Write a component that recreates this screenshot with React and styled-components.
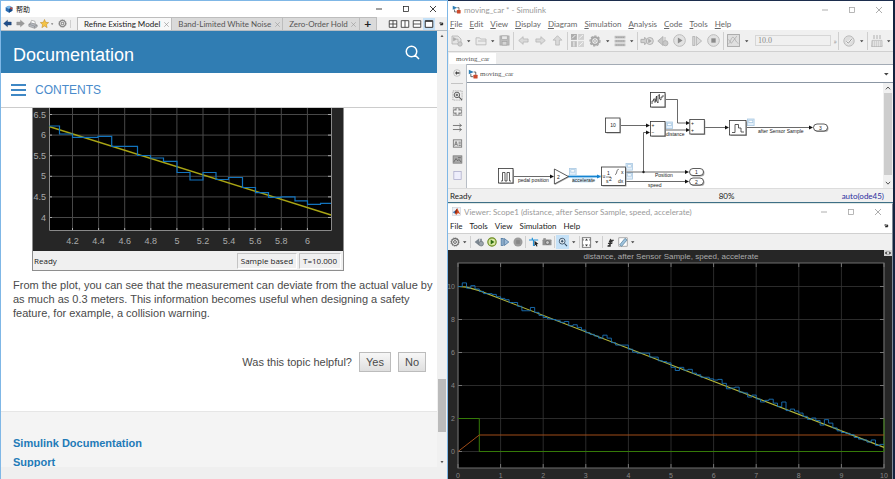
import React from "react";
import styled, { createGlobalStyle, css } from "styled-components";

const UI_FONT = `"Lato", "Noto Sans CJK SC", sans-serif`;
const DOC_FONT = `"Liberation Sans", Arial, sans-serif`;

const GlobalStyle = createGlobalStyle`
  * {
    box-sizing: border-box;
  }
  body {
    margin: 0;
    background: #14233f;
    font-family: ${UI_FONT};
    font-size: 8px;
    line-height: 12px;
    overflow: hidden;
  }
  button, input, select {
    margin: 0;
    padding: 0;
    border: 0;
    background: none;
    color: inherit;
    font: inherit;
  }
  svg {
    display: block;
  }
`;

/* ---------- shared parts ---------- */

const Desktop = styled.div`
  display: grid;
  grid-template-columns: 448fr 445fr;
  height: 100vh;
  padding-right: 2px;
`;
const Column = styled.div`
  display: flex;
  flex-direction: column;
  min-width: 0;
  min-height: 0;
`;
const Window = styled.section`
  display: flex;
  flex-direction: column;
  min-width: 0;
  min-height: 0;
  background: #fff;
`;
const TitleBar = styled.header`
  display: flex;
  align-items: center;
  flex: none;
  gap: 3px;
  height: ${props => props.$height}px;
  padding: 0 8px 0 4px;
  color: ${props => (props.$inactive ? "#999" : "#111")};

  & h1 {
    margin: 0;
    font-size: ${props => props.$size || 8}px;
    font-weight: normal;
    white-space: nowrap;
  }
`;
const WindowButtons = styled.div`
  display: flex;
  gap: 15px;
  margin-left: auto;
`;
const IconButton = styled.button`
  display: flex;
  align-items: center;
  justify-content: center;
  flex: none;
  width: ${props => props.$w || 12}px;
  height: ${props => props.$h || 12}px;
  background: ${props => (props.$active ? "#c5e1f7" : "transparent")};
  opacity: ${props => (props.$faded ? 0.5 : 1)};
`;
const MenuBar = styled.nav`
  display: flex;
  align-items: center;
  flex: none;
  gap: 7px;
  height: ${props => props.$height}px;
  padding: 0 2px;
  color: ${props => props.$color};
`;
const MenuButton = styled.button`
  white-space: nowrap;

  &::first-letter {
    text-decoration: ${props => (props.$underline ? "underline" : "none")};
  }
`;
const Separator = styled.span`
  flex: none;
  width: 1px;
  height: ${props => props.$h || 18}px;
  margin: 0 1px;
  background: #cfcfcf;
`;
const MenuArrow = styled.span`
  margin-left: auto;
`;

const glyphs = {
  minimize: <path d="M3 6H9" stroke="currentColor" strokeWidth=".8" />,
  maximize: <rect x="3.5" y="3.5" width="5" height="5" fill="none" stroke="currentColor" strokeWidth=".7" />,
  close: <path d="M3 3L9 9M9 3L3 9" stroke="currentColor" strokeWidth=".8" />,
  caret: <path d="M4 5H8.6L6.3 7.6Z" fill="#444" />,
  dock: <path d="M3.5 4.5L7 7M5 7.3H8.6V4.3ZM4.3 4H7" stroke="#111" strokeWidth="1" fill="#111" />,
  cube: (
    <g>
      <path d="M6 1L11 3.5V8.5L6 11.5L1 8.5V3.5Z" fill="#2a6db4" />
      <path d="M1 3.5L6 6L11 3.5L6 1Z" fill="#7db9e8" />
      <path d="M6 6L11 3.5V8.5L6 11.5Z" fill="#174a86" />
      <path d="M7.5 2.5L11.5 5L9 7Z" fill="#d8432b" />
    </g>
  ),
  backBlue: <path d="M.8 6L6 1.6V4H11V8H6V10.4Z" fill="#1f4e8c" stroke="#16375f" strokeWidth=".5" />,
  nextGrey: <path d="M11.2 6L6 1.6V4H1V8H6V10.4Z" fill="#9a9a9a" stroke="#888" strokeWidth=".5" />,
  print: (
    <g stroke="#777" strokeWidth=".6">
      <path d="M2.6 5.4L4.4 1.6L8.4 2.8L8.8 6Z" fill="#fff" />
      <path d="M1 6.2L4 4.6L11 7.2V9.4L8 11.2L1 8.8Z" fill="#b9bdc4" />
      <path d="M1 6.2L8 8.6L11 7.2M8 8.6V11" fill="none" />
    </g>
  ),
  star: <path d="M6 .6L7.6 4.4L11.6 4.8L8.6 7.5L9.5 11.5L6 9.4L2.5 11.5L3.4 7.5L.4 4.8L4.4 4.4Z" fill="#f6c445" stroke="#b57d15" strokeWidth=".6" />,
  gearDark: (
    <g fill="none" stroke="#666">
      <circle cx="6" cy="6" r="5" strokeWidth=".8" strokeDasharray="1.6 .9" />
      <circle cx="6" cy="6" r="4.1" strokeWidth="1.3" />
      <circle cx="6" cy="6" r="1.7" strokeWidth="1.2" />
    </g>
  ),
  grid4: <path d="M1.5 2H10.5V10H1.5ZM6 2V10M1.5 6H10.5" fill="#fff" stroke="#333" strokeWidth="1" />,
  split2: <path d="M1.5 2H10.5V10H1.5ZM6 2V10" fill="#fff" stroke="#333" strokeWidth="1" />,
  rows2: <path d="M1.5 2H10.5V10H1.5ZM1.5 6H10.5" fill="#fff" stroke="#333" strokeWidth="1" />,
  single: <path d="M1.5 2H10.5V10H1.5ZM1.5 2.8H10.5" fill="#fff" stroke="#333" strokeWidth="1.2" />,
  search: <path d="M8.2 8.2L11.2 11.2M9.4 5.2A4.2 4.2 0 1 1 1 5.2A4.2 4.2 0 1 1 9.4 5.2Z" fill="none" stroke="#fff" strokeWidth="1.2" />,
  burger: <path d="M0 1H12M0 6H12M0 11H12" stroke="#3f88c5" strokeWidth="2" />,
  up: <path d="M4.2 7.2L6 4.6L7.8 7.2Z" fill="#555" />,
  down: <path d="M4.2 4.8L6 7.4L7.8 4.8Z" fill="#555" />,
  chevUp: <path d="M3.4 7.6L6 4.8L8.6 7.6" fill="none" stroke="#555" strokeWidth="1.2" />,
  chevDown: <path d="M3.4 4.6L6 7.4L8.6 4.6" fill="none" stroke="#555" strokeWidth="1.2" />,
  expand: <path d="M4 3L1 6L4 9M8 3L11 6L8 9M1 6H4M8 6H11" fill="none" stroke="#222" strokeWidth="1.8" />,
  model: (
    <g>
      <path d="M1 1L7 3.6L1 6.4Z" fill="#2f7fb5" />
      <path d="M7 3.6H9.3V7" fill="none" stroke="#333" strokeWidth=".9" />
      <rect x="6.5" y="6.8" width="5" height="4.6" rx=".6" fill="#cc4a2c" />
      <path d="M3.4 6V9.2H6.4" fill="none" stroke="#333" strokeWidth=".9" />
    </g>
  ),
  matlab: (
    <g>
      <rect x=".5" y=".5" width="11" height="11" fill="#eef1f5" stroke="#b9c2cc" strokeWidth=".6" />
      <path d="M1 7L4 5L6 7.5L4 9Z" fill="#3d7ab8" />
      <path d="M4 5.5L7 1.5L8.6 5L11 9.5L8 8L5.5 10.5L4.2 8.8Z" fill="#d2481f" />
      <path d="M7 1.5L6 7L4.2 8.8L4 5.5Z" fill="#7a2a1c" />
    </g>
  ),
  newModel: (
    <g fill="#e4e4e4" stroke="#aaa" strokeWidth=".7">
      <path d="M1 1H7L10 4V9H1Z" />
      <path d="M2.4 2.6L5.4 4.2L2.4 5.8Z" fill="#aaa" />
      <path d="M5.4 4.2H7V7" fill="none" />
      <circle cx="9" cy="9" r="2.2" fill="#cfcfcf" />
    </g>
  ),
  folder: <path d="M1 9.8V2.8H4.6L5.6 4H11V9.8ZM3 6H11" fill="#ececec" stroke="#b5b5b5" strokeWidth=".8" />,
  save: (
    <g stroke="#a2a2a2" strokeWidth=".7">
      <rect x="1" y="1" width="10" height="10" fill="#bdbdbd" />
      <rect x="3" y="1" width="6" height="4" fill="#e8e8e8" />
      <rect x="3.4" y="7.2" width="5.2" height="3.8" fill="#d6d6d6" />
    </g>
  ),
  left: <path d="M.8 6L5.6 1.8V4.3H11V7.7H5.6V10.2Z" fill="#dadada" stroke="#b2b2b2" strokeWidth=".8" />,
  right: <path d="M11.2 6L6.4 1.8V4.3H1V7.7H6.4V10.2Z" fill="#dadada" stroke="#b2b2b2" strokeWidth=".8" />,
  upArrow: <path d="M6 .8L10.8 5.6H8V11H4V5.6H1.2Z" fill="#dadada" stroke="#b2b2b2" strokeWidth=".8" />,
  library: (
    <g>
      <rect x="0" y="0" width="5.4" height="5.4" fill="#adadad" />
      <rect x="6.6" y="0" width="5.4" height="5.4" fill="#cfcfcf" />
      <rect x="0" y="6.6" width="5.4" height="5.4" fill="#bdbdbd" />
      <rect x="6.6" y="6.6" width="5.4" height="5.4" fill="#d3d3d3" />
      <path d="M1 4L4 1M7.6 4L11 1M2.7 7V11.6M7.6 10.8L11 7.6" stroke="#f4f4f4" strokeWidth=".9" />
    </g>
  ),
  gear: (
    <g fill="none" stroke="#a6a6a6">
      <circle cx="6" cy="6" r="5" strokeWidth="1.2" strokeDasharray="2.2 1.5" />
      <circle cx="6" cy="6" r="3.7" strokeWidth="2" />
      <circle cx="6" cy="6" r="1.4" strokeWidth=".8" />
    </g>
  ),
  config: (
    <g>
      <rect x=".6" y=".8" width="10.8" height="10.4" fill="#bcbcbc" />
      <path d="M0 4.2H12M0 8H12" stroke="#f2f2f2" strokeWidth="1.2" />
      <path d="M2 6H10M2 2.4H10M2 10H10" stroke="#999" strokeWidth=".8" strokeDasharray="1.4 .8" />
    </g>
  ),
  fastRestart: (
    <g fill="#cfcfcf" stroke="#adadad" strokeWidth=".8">
      <path d="M.8 4.6H4V2.8L7 6L4 9.2V7.4H.8Z" />
      <circle cx="8.4" cy="6" r="3" fill="#dedede" />
      <path d="M7.4 4.6L9.6 6L7.4 7.4Z" fill="#aaa" />
    </g>
  ),
  stepBack: (
    <g fill="#c8c8c8" stroke="#adadad" strokeWidth=".8">
      <path d="M6 1.5V10.5L.8 6Z" />
      <path d="M8 2V6" />
      <circle cx="8.4" cy="8.2" r="2.6" />
    </g>
  ),
  play: (
    <g>
      <circle cx="6" cy="6" r="5.4" fill="#e2e2e2" stroke="#bababa" strokeWidth=".9" />
      <path d="M4.5 3.2L8.8 6L4.5 8.8Z" fill="#8b8b8b" />
    </g>
  ),
  stepForward: (
    <g fill="#dcdcdc" stroke="#b2b2b2" strokeWidth=".9">
      <rect x="1.8" y="1.6" width="2" height="8.8" />
      <path d="M5.4 1.6V10.4L10.6 6Z" />
    </g>
  ),
  stop: (
    <g>
      <circle cx="6" cy="6" r="5.4" fill="#e2e2e2" stroke="#bababa" strokeWidth=".9" />
      <rect x="4" y="4" width="4" height="4" fill="#8b8b8b" />
    </g>
  ),
  scope: (
    <g fill="#e0e0e0" stroke="#ababab" strokeWidth=".9">
      <rect x=".5" y=".5" width="11" height="11" />
      <path d="M1.4 9C3 9 3.6 3 5.4 3S8 8 10.6 8.6M1.4 5L4 8.6L9 2" fill="none" strokeWidth=".7" />
    </g>
  ),
  check: (
    <g>
      <circle cx="6" cy="6" r="5.2" fill="#ddd" stroke="#b8b8b8" strokeWidth=".9" />
      <path d="M3.4 6.4L5.4 8.2L9 3.6" fill="none" stroke="#f6f6f6" strokeWidth="2.2" />
      <path d="M3.4 6.4L5.4 8.2L9 3.6" fill="none" stroke="#999" strokeWidth="1" />
    </g>
  ),
  build: (
    <g stroke="#b0b0b0" fill="none">
      <path d="M3 0V4M6 0V4M9 0V4" strokeWidth="1" />
      <path d="M1 7H11M1 9H11M.6 11H11.4" strokeWidth="1.2" strokeDasharray="1.4 .6" />
      <path d="M1 5.4H11V11.6H.6Z" strokeWidth=".7" />
    </g>
  ),
  hide: (
    <g>
      <circle cx="6" cy="6" r="4" fill="none" stroke="#aaa" strokeWidth=".8" />
      <path d="M3.6 6L6 3.6V5.2H9V6.8H6V8.4Z" fill="#444" />
    </g>
  ),
  zoomIn: (
    <g fill="none" stroke="#555">
      <rect x="1" y="1" width="10" height="10" strokeWidth=".6" strokeDasharray="1 1" />
      <circle cx="5.4" cy="5.4" r="3" strokeWidth="1" />
      <path d="M7.8 7.8L11 11M4 5.4H6.8M5.4 4V6.8" strokeWidth="1.1" />
    </g>
  ),
  fit: (
    <g>
      <rect x="1" y="1.4" width="10" height="9.2" fill="#8a8a8a" />
      <path d="M6 2.4V9.6M2 6H10" stroke="#f0f0f0" strokeWidth="2" />
      <path d="M2 4V2.4H4M8 2.4H10V4M10 8V9.6H8M4 9.6H2V8" fill="none" stroke="#fff" strokeWidth=".8" />
    </g>
  ),
  lines: <path d="M1 3.8H10M1 8.2H10M8 2L10.4 3.8L8 5.4M8 6.6L10.4 8.2L8 10" fill="none" stroke="#666" strokeWidth=".9" />,
  annotation: (
    <g fill="none" stroke="#666" strokeWidth=".8">
      <rect x="1.4" y="2" width="9.2" height="8" fill="#e2e2e2" />
      <path d="M2.8 8.4L4.4 3.8L6 8.4M3.4 7H5.4M7.2 4.6H9.6M7.2 6.4H9.6M7.2 8.2H9.6" />
    </g>
  ),
  image: (
    <g fill="#a8a8a8" stroke="#777" strokeWidth=".8">
      <rect x="1.2" y="2" width="9.6" height="8" />
      <path d="M2 8.6L4.4 5L6.2 7.4L7.6 6L10 8.8M6.6 4H9.6" fill="none" stroke="#555" />
    </g>
  ),
  area: <rect x="2" y="1.6" width="8" height="8.8" fill="#eeeefb" stroke="#a9a9c9" strokeWidth=".8" />,
  runGreen: (
    <g>
      <circle cx="6" cy="6" r="5" fill="#d9e9a4" stroke="#6a8a1e" strokeWidth="1.4" />
      <path d="M4.4 3L9 6L4.4 9Z" fill="#2f6f10" />
    </g>
  ),
  backStep: (
    <g>
      <path d="M6.4 1.6V10.4L.8 6Z" fill="#7c8791" />
      <path d="M7.4 2H9.4V5.6H7.4Z" fill="#7c8791" />
      <circle cx="8.6" cy="8" r="2.8" fill="#9aa4ac" stroke="#666e75" strokeWidth=".8" />
    </g>
  ),
  fwdStep: (
    <g fill="#9dbbd8" stroke="#45719c" strokeWidth=".9">
      <rect x="1.4" y="1.8" width="2.4" height="8.4" />
      <path d="M5.2 1.8V10.2L10.6 6Z" />
    </g>
  ),
  stopGrey: (
    <g>
      <circle cx="6" cy="6" r="5.4" fill="#9a9a9a" />
      <rect x="3.8" y="3.8" width="4.4" height="4.4" fill="#878787" />
    </g>
  ),
  highlight: (
    <g>
      <path d="M0 3.6H11M4 3.6V1M5.4 3.6V10H7" fill="none" stroke="#2291d8" strokeWidth="1.4" />
      <path d="M6.6 4.6L11.4 8.4L9.2 8.8L10.2 11L9 11.4L8 9.2L6.6 10.4Z" fill="#222" />
    </g>
  ),
  camera: (
    <g>
      <rect x=".6" y="3" width="10.8" height="7" rx=".8" fill="#8f8f8f" />
      <circle cx="6.6" cy="6.6" r="2.3" fill="#c9c9c9" stroke="#555" strokeWidth=".8" />
      <rect x="1.6" y="1.6" width="3" height="1.6" fill="#777" />
    </g>
  ),
  zoomDark: (
    <g fill="none" stroke="#30475e">
      <circle cx="5" cy="5" r="3.5" fill="#e9f3fb" strokeWidth="1" />
      <path d="M7.8 7.8L10.8 11M3.4 5H6.6M5 3.4V6.6" strokeWidth="1.3" />
    </g>
  ),
  autoscale: (
    <g>
      <rect x="1.4" y=".8" width="9.2" height="10.4" fill="#fff" stroke="#555" strokeWidth=".8" />
      <path d="M6 1.6L7.6 3.8H4.4ZM6 10.4L7.6 8.2H4.4Z" fill="#333" />
      <path d="M2.4 2V4M9.6 2V4M2.4 8V10M9.6 8V10" stroke="#555" strokeWidth=".8" />
    </g>
  ),
  trigger: <path d="M2 10.8H5.6V3H10.4M2.6 7.4H8.4M4.4 5.4L6 2L8 5.4Z" fill="#333" stroke="#333" strokeWidth="1.4" />,
  measure: (
    <g>
      <rect x="1" y="1" width="10" height="10" fill="#fff" stroke="#777" strokeWidth=".7" />
      <path d="M2 9.4L8.4 1.6L10.8 3.6L4.4 11.2Z" fill="#9fc3dd" stroke="#4e7896" strokeWidth=".8" />
    </g>
  ),
};

const Icon = ({ name, size = 12, color }) => (
  <svg width={size} height={size} viewBox="0 0 12 12" color={color} aria-hidden="true">
    {glyphs[name]}
  </svg>
);

const Controls = () => (
  <WindowButtons>
    {["minimize", "maximize", "close"].map(name => (
      <IconButton key={name} aria-label={name}>
        <Icon name={name} />
      </IconButton>
    ))}
  </WindowButtons>
);

/* ---------- help browser ---------- */

const HelpWindow = styled(Window)`
  border: 1px solid #7fb7e6;
  border-bottom: 0;
`;
const TabBar = styled.div`
  display: flex;
  align-items: stretch;
  flex: none;
  height: 14px;
  border-bottom: 1px solid #b5bcc2;
  background: #f0f0f0;
`;
const TabTools = styled.div`
  display: flex;
  align-items: center;
  flex: none;
  gap: 1px;
  width: 76px;
`;
const Tab = styled.div`
  display: flex;
  align-items: center;
  gap: 1px;
  padding-left: 6px;
  border: solid #bdbdbd;
  border-width: 1px 1px 0 0;
  background: ${props => (props.$active ? "#f8f8f8" : "#dadada")};
  color: ${props => (props.$active ? "#222" : "#555")};
  white-space: nowrap;

  &:nth-child(2) {
    border-left-width: 1px;
  }
`;
const AddTab = styled.button`
  width: 17px;
  border: 1px solid #bdbdbd;
  border-width: 1px 1px 0 0;
  background: #dadada;
  color: #222;
  font-size: 12px;
  font-weight: bold;
  line-height: 12px;
`;
const LayoutTools = styled.div`
  display: flex;
  align-items: center;
  flex: 1;
  justify-content: flex-end;
`;
const HelpBody = styled.div`
  display: flex;
  flex: 1;
  min-height: 0;
`;
const Page = styled.main`
  display: flex;
  flex: 1;
  flex-direction: column;
  min-width: 0;
  overflow: hidden;
  color: #4a4a4a;
  font-family: ${DOC_FONT};
`;
const Banner = styled.div`
  display: flex;
  align-items: center;
  justify-content: space-between;
  flex: none;
  height: 42px;
  padding: 0 17px 0 12px;
  background: #307db3;
  color: #fff;

  & h2 {
    margin: 0;
    padding-top: 6px;
    font-size: 18px;
    font-weight: normal;
    line-height: 24px;
  }
`;
const ContentsBar = styled.button`
  display: flex;
  align-items: center;
  flex: none;
  gap: 9px;
  height: 35px;
  padding: 0 10px;
  border-bottom: 1px solid #ccc;
  color: #4a8bcb;
  font-size: 12px;
`;
const Figure = styled.figure`
  flex: none;
  width: 312px;
  margin: 0 0 0 31px;
  border: solid #8e8e8e;
  border-width: 0 1px 1px 1px;
  background: #262626;
`;
const FigureStatus = styled.figcaption`
  display: flex;
  align-items: center;
  gap: 2px;
  height: 19px;
  padding: 0 2px 0 1px;
  background: #f0f0f0;
  color: #222;
  font-family: "Open Sans", sans-serif;

  & span:first-child {
    flex: 1;
  }
  & span + span {
    padding: 1px 3px;
    border: 1px solid #c4c4c4;
    border-right-color: #fff;
    border-bottom-color: #fff;
  }
`;
const Paragraph = styled.p`
  flex: none;
  margin: 7px 4px 0 12px;
  font-size: 11px;
  line-height: 14px;
`;
const Feedback = styled.div`
  display: flex;
  align-items: center;
  justify-content: flex-end;
  flex: none;
  gap: 7px;
  margin: 32px 11px 39px;
  font-size: 11px;
`;
const AnswerButton = styled.button`
  padding: 2px 6px;
  border: 1px solid #bcbcbc;
  background: linear-gradient(#f7f7f7, #dfdfdf);
  line-height: 14px;
`;
const PageFooter = styled.footer`
  display: flex;
  flex: 1 0 auto;
  flex-direction: column;
  gap: 6px;
  padding: 25px 12px 0;
  border-top: 1px solid #e6e6e6;
  background: #f4f4f4;

  & a {
    color: #1f7bb8;
    font-size: 11px;
    font-weight: bold;
    line-height: 13px;
    text-decoration: none;
  }
`;
const ScrollBar = styled.div`
  display: flex;
  flex: none;
  flex-direction: column;
  width: 10px;
  background: #f0f0f0;
`;
const ScrollSpace = styled.span`
  flex: ${props => props.$grow};
`;
const ScrollThumb = styled.span`
  flex: ${props => props.$grow};
  margin: 0 1px;
  background: ${props => props.$color};
`;
const HelpStatus = styled.div`
  flex: none;
  height: 12px;
  background: #efefef;
`;

const xTicks = [4.2, 4.4, 4.6, 4.8, 5, 5.2, 5.4, 5.6, 5.8, 6];
const yTicks = [6.5, 6, 5.5, 5, 4.5, 4];
const helpX = t => 72.5 + (t - 4.2) * 130.5;
const helpY = v => 114.5 + (6.5 - v) * 41.2;

const HelpPlot = () => (
  <svg viewBox="33 108 310 143" width="100%" fontFamily="Liberation Sans" fontSize="9" fill="#aaa">
    <rect x="33" y="108" width="310" height="143" fill="#262626" />
    <rect x="49" y="108" width="282" height="122.5" fill="#000" />
    {xTicks.map(t => (
      <g key={t}>
        <path d={`M${helpX(t)} 108V230`} stroke="#484848" />
        <path d={`M${helpX(t)} 228V231`} stroke="#aaa" />
        <text x={helpX(t)} y="244" textAnchor="middle">{t}</text>
      </g>
    ))}
    {yTicks.map(v => (
      <g key={v}>
        <path d={`M49 ${helpY(v)}H331`} stroke="#484848" />
        <path d={`M49 ${helpY(v)}h3M328 ${helpY(v)}h3`} stroke="#aaa" />
        <text x="46" y={helpY(v) + 3} textAnchor="end">{v}</text>
      </g>
    ))}
    <path d="M49.5 108V230.5H331.5V108" fill="none" stroke="#8a8a8a" />
    <path d="M49 126.5L331 215" stroke="#a8a414" strokeWidth="1.4" />
    <path
      d="M49 126H59.5V134H72.5V137.3H98V136.3H111.7V146.3H137.5V155.5H150.5V158H163.5V161.3H177V172.5H190V180H203V172.5H216V179.5H228.5V177.5H242.5V187.5H255.5V192.7H268.5V197.3H281V196.8H295V200.8H307.5V204.3H320.5V203.3H331"
      fill="none"
      stroke="#1273bd"
      strokeWidth="1.2"
    />
  </svg>
);

const HelpBrowser = () => (
  <HelpWindow>
    <TitleBar $height={16} $size={7}>
      <Icon name="cube" size={8} />
      <h1>帮助</h1>
      <Controls />
    </TitleBar>
    <TabBar>
      <TabTools>
        <IconButton aria-label="Back"><Icon name="backBlue" size={9} /></IconButton>
        <IconButton aria-label="Forward"><Icon name="nextGrey" size={9} /></IconButton>
        <IconButton aria-label="Print"><Icon name="print" size={10} /></IconButton>
        <IconButton aria-label="Favorites" $w={15}>
          <Icon name="star" size={9} />
          <Icon name="caret" size={6} />
        </IconButton>
        <IconButton aria-label="Preferences"><Icon name="gearDark" size={9} /></IconButton>
        <Separator $h={8} />
      </TabTools>
      {["Refine Existing Model", "Band-Limited White Noise", "Zero-Order Hold"].map((title, i) => (
        <Tab key={title} $active={i === 0}>
          {title}
          <IconButton aria-label={`Close ${title}`} $w={10} $faded>
            <Icon name="close" size={9} />
          </IconButton>
        </Tab>
      ))}
      <AddTab>+</AddTab>
      <LayoutTools>
        {["grid4", "split2", "rows2", "single"].map(name => (
          <IconButton key={name} aria-label={name} $w={12} $active={name === "single"}>
            <Icon name={name} size={10} />
          </IconButton>
        ))}
        <IconButton aria-label="Dock"><Icon name="dock" size={8} /></IconButton>
      </LayoutTools>
    </TabBar>
    <HelpBody>
      <Page>
        <Banner>
          <h2>Documentation</h2>
          <IconButton aria-label="Search" $w={16} $h={24}>
            <Icon name="search" size={15} />
          </IconButton>
        </Banner>
        <ContentsBar>
          <svg width="15" height="12" viewBox="0 0 12 12" preserveAspectRatio="none">{glyphs.burger}</svg>
          CONTENTS
        </ContentsBar>
        <Figure>
          <HelpPlot />
          <FigureStatus>
            <span>Ready</span>
            <span>Sample based</span>
            <span>T=10.000</span>
          </FigureStatus>
        </Figure>
        <Paragraph>
          From the plot, you can see that the measurement can deviate from the actual value by
          <br />
          as much as 0.3 meters. This information becomes useful when designing a safety
          <br />
          feature, for example, a collision warning.
        </Paragraph>
        <Feedback>
          Was this topic helpful?
          <AnswerButton>Yes</AnswerButton>
          <AnswerButton>No</AnswerButton>
        </Feedback>
        <PageFooter>
          <a href="#simulink">Simulink Documentation</a>
          <a href="#support">Support</a>
        </PageFooter>
      </Page>
      <ScrollBar>
        <Icon name="up" size={10} />
        <ScrollSpace $grow={338} />
        <ScrollThumb $grow={53} $color="#bbb" />
        <ScrollSpace $grow={25} />
        <Icon name="down" size={10} />
      </ScrollBar>
    </HelpBody>
    <HelpStatus />
  </HelpWindow>
);

/* ---------- model editor ---------- */

const EditorWindow = styled(Window)`
  flex: none;
  border-top: 1px solid #1c2d4d;
  border-bottom: 1px solid #3e6f86;
`;
const ToolBar = styled.div`
  display: flex;
  align-items: center;
  flex: none;
  height: ${props => props.$height}px;
  padding-left: 1px;
  border: solid #d0d0d0;
  border-width: ${props => (props.$topLine ? "1px 0 0" : "0 0 1px")};
  background: #f0f0f0;
`;
const StopTime = styled.input`
  flex: 0 1 76px;
  min-width: 0;
  height: 11px;
  margin: 0 auto 0 4px;
  padding: 0 2px;
  border: 1px solid #d6d6d6;
  color: #888;
  font-family: "Liberation Serif", serif;
`;
const More = styled.span`
  color: #999;
`;
const FileTabs = styled.div`
  display: flex;
  align-items: flex-end;
  flex: none;
  height: 12px;
  padding-left: 1px;
  background: #ececec;
`;
const serifName = css`
  color: #555;
  font-family: "Liberation Serif", serif;
  font-size: 7px;
`;
const FileTab = styled.button`
  ${serifName}
  height: 11px;
  padding: 0 7px;
  background: #fff;
`;
const EditorBody = styled.div`
  display: flex;
`;
const Palette = styled.div`
  display: flex;
  align-items: center;
  flex: none;
  flex-direction: column;
  gap: 4px;
  width: 19px;
  padding-top: 3px;
  border-right: 1px solid #b8bec6;
  background: #f0f0f0;

  & hr {
    width: 12px;
    margin: 0 0 1px;
    border: 0;
    border-top: 1px solid #c4c4c4;
  }
`;
const CanvasColumn = styled.div`
  flex: 1;
  min-width: 0;
  border-top: 1px solid #a3abb5;
`;
const AddressBar = styled.div`
  display: flex;
  align-items: center;
  gap: 2px;
  height: 18px;
  padding: 0 1px;
  border-bottom: 1px solid #8b96a3;

  & select {
    ${serifName}
    flex: 1;
    min-width: 0;
    height: 12px;
    appearance: none;
  }
`;
const CanvasRow = styled.div`
  display: flex;
`;
const CanvasArea = styled.div`
  flex: 1;
  min-width: 0;
`;
const StatusBar = styled.footer`
  display: grid;
  grid-template-columns: 1fr auto 1fr;
  align-items: center;
  height: 14px;
  padding: 0 9px 0 2px;
  border-top: 1px solid #dcdcdc;
  background: #f0f0f0;
  color: #222;

  & span:last-child {
    color: #2c2c9e;
    text-align: right;
  }
`;
const Percent = styled.span`
  padding-left: 119px;
`;

const Block = ({ x, y, w = 14.5, h = 14.5 }) => (
  <g>
    <rect x={x + 1} y={y + 1} width={w} height={h} fill="#aaa" />
    <rect x={x} y={y} width={w} height={h} fill="#fff" stroke="#333" strokeWidth=".8" />
  </g>
);
const Wire = ({ d, x, y }) => (
  <g>
    <path d={d} fill="none" stroke="#444" strokeWidth=".8" />
    <path d={`M${x} ${y}l-4 -2v4Z`} fill="#111" />
  </g>
);
const Outport = ({ x, y, n }) => (
  <g>
    <rect x={x + 1} y={y - 2.5} width="14" height="7" rx="3.5" fill="#aaa" />
    <rect x={x} y={y - 3.5} width="14" height="7" rx="3.5" fill="#fff" stroke="#333" strokeWidth=".8" />
    <text x={x + 7} y={y + 2} textAnchor="middle">{n}</text>
  </g>
);
const Badge = ({ x, y }) => (
  <g fill="#fff" stroke="#a9c8e2" strokeWidth=".8">
    <rect x={x} y={y} width="6.6" height="6.6" fill="#e3effa" />
    <rect x={x + 1.3} y={y + 1.2} width="4" height="2.4" />
  </g>
);

const ModelDiagram = () => (
  <svg viewBox="467 83 416 105" width="100%" fontFamily="Liberation Sans" fontSize="5" fill="#222">
    <Badge x={569.5} y={168.5} />
    <Badge x={626} y={163.5} />
    <Badge x={626} y={172.5} />
    <Badge x={666} y={122} />
    <Badge x={747.5} y={119} />

    <Wire d="M513 176.5H553" x={554} y={176.5} />
    <Wire d="M620 125.5H648" x={650} y={125.5} />
    <Wire d="M665 99.5H677.5V123H688" x={690} y={123} />
    <Wire d="M643.5 172V132.5H648" x={650} y={132.5} />
    <Wire d="M664 130H688" x={690} y={130} />
    <Wire d="M704 127.5H727" x={729} y={127.5} />
    <Wire d="M746 127.5H811" x={813} y={127.5} />
    <Wire d="M625 172H687" x={689} y={172} />
    <Wire d="M625 181.5H687" x={689} y={181.5} />
    <circle cx="643.5" cy="172" r="1.2" />
    <path d="M568 176.5H601" stroke="#bfe0f7" strokeWidth="3" />
    <path d="M568 176.5H599" stroke="#1583d0" strokeWidth="1.4" />
    <path d="M601 176.5l-4 -2v4Z" fill="#1583d0" />

    <Block x={498.5} y={168.5} />
    <path d="M501 181H502.5V172.5H505V181H507V172.5H509.5V181H511" fill="none" stroke="#333" strokeWidth=".8" />
    <path d="M555 170L569 177.5L555 185Z" fill="#aaa" />
    <path d="M554.4 169L568.4 176.5L554.4 184Z" fill="#fff" stroke="#333" strokeWidth=".8" />
    <text x="557" y="178.5">2</text>
    <Block x={601.5} y={167} w={24} h={18.5} />
    <text x="602.5" y="178">u</text>
    <text x="607" y="175">1</text>
    <path d="M606 177H611" stroke="#333" strokeWidth=".6" />
    <text x="606" y="183">s</text>
    <text x="609" y="181">2</text>
    <path d="M615 174.5C617 175 616.6 168.5 618.6 169.4" fill="none" stroke="#333" strokeWidth=".7" />
    <text x="621" y="173.5">x</text>
    <text x="618" y="183">dx</text>
    <Block x={605.5} y={118} />
    <text x="613" y="127" textAnchor="middle">10</text>
    <Block x={650.5} y={92.5} />
    <path d="M652 104V101H653.5V99H655V102.5L656.5 96V101L658 103V95.5L659.5 94.5V99L661 100V97H663V95" fill="none" stroke="#333" strokeWidth=".8" />
    <Block x={650.5} y={121.5} />
    <text x="651.5" y="127">+</text>
    <text x="651.5" y="134">−</text>
    <Block x={689.8} y={119.5} />
    <text x="691" y="125">+</text>
    <text x="691" y="132">+</text>
    <Block x={729.5} y={120.5} w={16.5} />
    <path d="M732 132.5H735V124.5H738.5V128H741V132H744" fill="none" stroke="#333" strokeWidth=".8" />
    <Outport x={689.5} y={172} n={1} />
    <Outport x={689.5} y={181.5} n={2} />
    <Outport x={813.5} y={127.5} n={3} />

    <text x="518" y="181.5">pedal position</text>
    <rect x="572" y="178" width="21" height="4.6" fill="#d5ebfa" />
    <text x="572" y="181.5">accelerate</text>
    <text x="655" y="177">Position</text>
    <text x="648" y="186.5">speed</text>
    <text x="666" y="135.5">distance</text>
    <text x="758" y="133">after Sensor Sample</text>
  </svg>
);

const Caret = ({ label }) => (
  <IconButton $w={9} aria-label={label}><Icon name="caret" size={10} /></IconButton>
);
const Tool = ({ name, w = 17, size = 12 }) => (
  <IconButton $w={w} $h={18} aria-label={name}><Icon name={name} size={size} /></IconButton>
);

const editorMenu = ["File", "Edit", "View", "Display", "Diagram", "Simulation", "Analysis", "Code", "Tools", "Help"];

const Editor = () => (
  <EditorWindow>
    <TitleBar $height={17} $inactive>
      <Icon name="model" size={9} />
      <h1>moving_car * - Simulink</h1>
      <Controls />
    </TitleBar>
    <MenuBar $height={12} $color="#666">
      {editorMenu.map(item => <MenuButton key={item} $underline>{item}</MenuButton>)}
    </MenuBar>
    <ToolBar $height={22}>
      <Tool name="newModel" w={15} />
      <Caret label="New options" />
      <Tool name="folder" w={15} />
      <Caret label="Open options" />
      <Tool name="save" w={15} size={11} />
      <Separator />
      <Tool name="left" size={11} />
      <Tool name="right" size={11} />
      <Tool name="upArrow" size={11} />
      <Separator />
      <Tool name="library" size={13} />
      <Tool name="gear" />
      <Caret label="Configuration options" />
      <Tool name="config" w={15} />
      <Caret label="Explorer options" />
      <Separator />
      <Tool name="fastRestart" w={15} size={14} />
      <Tool name="stepBack" />
      <Tool name="play" size={13} />
      <Tool name="stepForward" />
      <Tool name="stop" size={13} />
      <Separator />
      <Tool name="scope" size={13} />
      <Caret label="Inspector options" />
      <StopTime aria-label="Stop time" defaultValue="10.0" />
      <More>»</More>
      <Separator />
      <Tool name="check" />
      <Caret label="Advisor options" />
      <Separator />
      <Tool name="build" w={15} />
      <Caret label="Build options" />
    </ToolBar>
    <FileTabs>
      <FileTab>moving_car</FileTab>
    </FileTabs>
    <EditorBody>
      <Palette>
        <IconButton aria-label="Hide browser"><Icon name="hide" size={10} /></IconButton>
        <hr />
        {["zoomIn", "fit", "lines", "annotation", "image", "area"].map(name => (
          <IconButton key={name} aria-label={name}><Icon name={name} size={11} /></IconButton>
        ))}
      </Palette>
      <CanvasColumn>
        <AddressBar>
          <Icon name="model" size={10} />
          <select aria-label="Model path" defaultValue="moving_car">
            <option>moving_car</option>
          </select>
          <Icon name="caret" size={12} />
        </AddressBar>
        <CanvasRow>
          <CanvasArea><ModelDiagram /></CanvasArea>
          <ScrollBar>
            <Icon name="chevUp" size={10} />
            <ScrollThumb $grow={82} $color="#cdcdcd" />
            <ScrollSpace $grow={3} />
            <Icon name="chevDown" size={10} />
          </ScrollBar>
        </CanvasRow>
      </CanvasColumn>
    </EditorBody>
    <StatusBar>
      <span>Ready</span>
      <Percent>80%</Percent>
      <span>auto(ode45)</span>
    </StatusBar>
  </EditorWindow>
);

/* ---------- scope viewer ---------- */

const ScopeWindow = styled(Window)`
  flex: 1;
  border-top: 1px solid #dfe7e4;
  border-right: 1px solid #7d8894;
`;
const ScopeArea = styled.div`
  position: relative;
  flex: 1;
  min-height: 0;
  background: #262626;

  & > svg {
    width: 100%;
    height: 100%;
  }
`;
const Expand = styled.button`
  position: absolute;
  top: 0;
  right: 0;
  display: flex;
  align-items: center;
  justify-content: center;
  width: 8px;
  height: 6px;
  background: #d5d5d5;
`;

// sensor samples, one every 0.1 s
const samples = [
  10, 10.22, 9.9, 10.05, 9.85, 9.7, 9.57, 9.57, 9.52, 9.38,
  9.28, 9.2, 9.03, 9.03, 8.8, 8.53, 8.53, 8.73, 8.43, 8.25,
  8.12, 8.04, 8, 7.93, 7.83, 7.88, 7.62, 7.68, 7.52, 7.36,
  7.2, 7.1, 7, 6.87, 7.05, 6.87, 6.6, 6.45, 6.45, 6.45,
  6.2, 6.02, 5.96, 5.96, 5.96, 5.72, 5.72, 5.5, 5.45, 5.37,
  5.1, 4.91, 5.1, 4.93, 4.98, 4.75, 4.65, 4.5, 4.5, 4.4,
  4.33, 4.37, 4.13, 3.8, 3.85, 3.9, 3.6, 3.55, 3.3, 3.42,
  3.18, 3, 3.1, 3.17, 2.93, 2.72, 3, 2.48, 2.57, 2.45,
  2.33, 2.13, 1.95, 2.03, 1.88, 1.6, 1.93, 1.72, 1.43, 1.25,
  1.15, 1.1, 1.02, 0.85, 0.75, 0.7, 0.57, 0.7, 0.37, 0.43,
];
const sx = t => 458 + t * 42.6;
const sy = v => 451.5 - v * 16.5;
const stairs = samples.map((v, i) => `${i ? "V" : `M${sx(0)} `}${sy(v)}H${sx((i + 1) / 10)}`).join("");
const seconds = [0, 1, 2, 3, 4, 5, 6, 7, 8, 9, 10];

const ScopePlot = () => (
  <svg viewBox="448 250 444 229" fontFamily="Liberation Sans" fontSize="7" fill="#888">
    <rect x="458" y="263" width="426" height="205" fill="#000" />
    <text x="671" y="259" fontSize="8" fill="#aaa" textAnchor="middle">
      distance, after Sensor Sample, speed, accelerate
    </text>
    {seconds.map(t => (
      <g key={t}>
        <path d={`M${sx(t)} 263V468`} stroke="#363636" strokeWidth=".8" />
        <path d={`M${sx(t)} 263v4M${sx(t)} 468v-4`} stroke="#8a8a8a" strokeWidth=".8" />
        <text x={sx(t)} y="477.5" textAnchor="middle">{t}</text>
      </g>
    ))}
    {[0, 2, 4, 6, 8, 10].map(v => (
      <g key={v}>
        <path d={`M458 ${sy(v)}H884`} stroke="#363636" strokeWidth=".8" />
        <path d={`M458 ${sy(v)}h4M884 ${sy(v)}h-4`} stroke="#8a8a8a" strokeWidth=".8" />
        <text x="455" y={sy(v) + 2.5} textAnchor="end">{v}</text>
      </g>
    ))}
    <rect x="458" y="263" width="426" height="205" fill="none" stroke="#6e6e6e" />
    <path d={`M${sx(0)} ${sy(2)}H${sx(0.5)}V${sy(0)}H${sx(10)}V${sy(2)}`} fill="none" stroke="#357a08" />
    <path d={`M${sx(0)} ${sy(0)}L${sx(0.5)} ${sy(1)}H${sx(10)}`} fill="none" stroke="#a04c18" />
    <path
      d={`M${sx(0)} ${sy(10)}L${sx(0.2)} ${sy(9.96)}L${sx(0.5)} ${sy(9.75)}L${sx(10)} ${sy(0.25)}`}
      fill="none"
      stroke="#b5b83a"
      strokeWidth="1.1"
    />
    <path d={stairs} fill="none" stroke="#1a72b8" strokeWidth=".9" />
  </svg>
);

const Scope = () => (
  <ScopeWindow>
    <TitleBar $height={15} $inactive>
      <Icon name="matlab" size={9} />
      <h1>Viewer: Scope1 (distance, after Sensor Sample, speed, accelerate)</h1>
      <Controls />
    </TitleBar>
    <MenuBar $height={14} $color="#222">
      {["File", "Tools", "View", "Simulation", "Help"].map(item => <MenuButton key={item}>{item}</MenuButton>)}
      <MenuArrow><Icon name="dock" size={8} /></MenuArrow>
    </MenuBar>
    <ToolBar $height={17} $topLine>
      <Tool name="gearDark" w={11} size={10} />
      <Caret label="Settings options" />
      <Separator $h={12} />
      <Tool name="backStep" w={13} size={10} />
      <Tool name="runGreen" w={13} size={10} />
      <Tool name="fwdStep" w={13} size={10} />
      <Tool name="stopGrey" w={13} size={10} />
      <Separator $h={12} />
      <Tool name="highlight" w={13} size={10} />
      <Tool name="camera" w={13} size={10} />
      <Separator $h={12} />
      <IconButton $w={13} $h={14} $active aria-label="Zoom"><Icon name="zoomDark" size={10} /></IconButton>
      <Caret label="Zoom options" />
      <Separator $h={12} />
      <Tool name="autoscale" w={11} size={11} />
      <Caret label="Scale options" />
      <Separator $h={12} />
      <Tool name="trigger" w={13} size={9} />
      <Tool name="measure" w={11} size={10} />
      <Caret label="Measurement options" />
    </ToolBar>
    <ScopeArea>
      <ScopePlot />
      <Expand aria-label="Maximize axes"><Icon name="expand" size={6} /></Expand>
    </ScopeArea>
  </ScopeWindow>
);

const App = () => {
  return (
    <>
      <GlobalStyle />
      <Desktop>
        <HelpBrowser />
        <Column>
          <Editor />
          <Scope />
        </Column>
      </Desktop>
    </>
  );
};

export default App;
